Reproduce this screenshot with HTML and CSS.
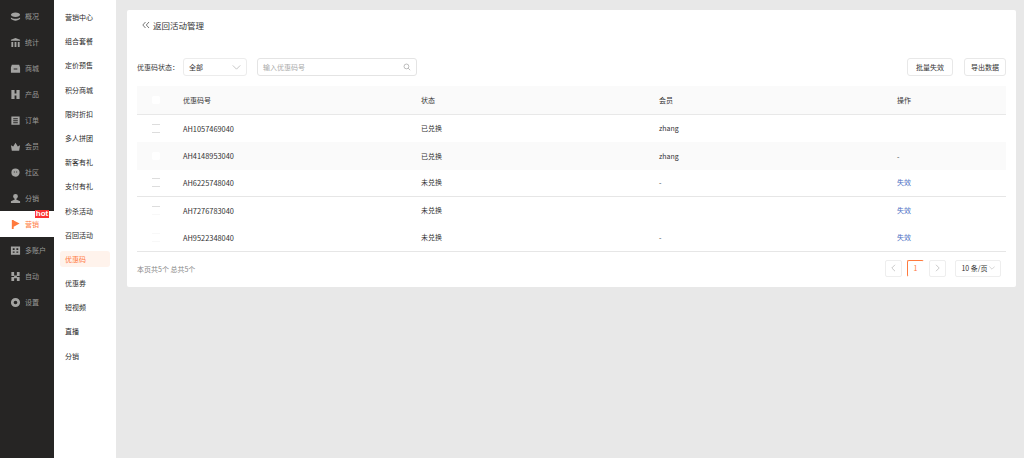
FILE: index.html
```html
<!DOCTYPE html>
<html lang="zh">
<head>
<meta charset="utf-8">
<title>优惠码</title>
<link rel="stylesheet" href="styles.css">
</head>
<body>
<div class="app">
  <nav class="rail">
    <a class="rail-item"><svg class="ri" viewBox="0 0 12 12"><path d="M6 1.500c3 0 5 1.200 5 2.500S9 6.500 6 6.500 1 5.300 1 4s2-2.500 5-2.500z"/><path d="M1 7c1 1 3 1.500 5 1.500S10 8 11 7v1.500C10 9.800 8 10.500 6 10.500S2 9.800 1 8.500z"/></svg>概况</a>
    <a class="rail-item"><svg class="ri" viewBox="0 0 12 12"><path d="M1 3 6 1l5 2v1H1zM1.500 5.500h2V11h-2zM5 5.500h2V11H5zM8.500 5.500h2V11h-2z"/></svg>统计</a>
    <a class="rail-item"><svg class="ri" viewBox="0 0 12 12"><path d="M2 2h8l1 3v5.500H1V5zM4 6v1h4V6z" fill-rule="evenodd"/></svg>商城</a>
    <a class="rail-item"><svg class="ri" viewBox="0 0 12 12"><path d="M1.500 1h3.500v10H1.500zM7 1h3.500v10H7zM5 5h2v2H5z"/></svg>产品</a>
    <a class="rail-item"><svg class="ri" viewBox="0 0 12 12"><path d="M1.500 1.500h9v9h-9zM3.500 3.500v1h5v-1zM3.500 5.800v1h5v-1zM3.500 8v1h5V8z" fill-rule="evenodd"/></svg>订单</a>
    <a class="rail-item"><svg class="ri" viewBox="0 0 12 12"><path d="M1 4.500 3.500 6 6 2l2.500 4L11 4.500l-1 6H2z"/></svg>会员</a>
    <a class="rail-item"><svg class="ri" viewBox="0 0 12 12"><path d="M6 1.500a4.500 4.500 0 1 1 0 9 4.500 4.500 0 0 1 0-9zM4.200 5v1h1V5zM6.800 5v1h1V5z" fill-rule="evenodd"/></svg>社区</a>
    <a class="rail-item"><svg class="ri" viewBox="0 0 12 12"><path d="M6 1a2.600 2.600 0 0 1 2.600 2.600c0 1.300-.8 2.400-1.800 2.800v.8L11 9v2H1V9l4.200-1.800v-.8C4.200 6 3.400 4.900 3.400 3.600A2.600 2.600 0 0 1 6 1z"/></svg>分销</a>
    <a class="rail-item rail-active"><svg class="ri" viewBox="0 0 12 12"><path d="M2 1h2v10H2zM4 1.500 10.500 5 4 8.500z"/></svg>营销<span class="hot">hot</span></a>
    <a class="rail-item"><svg class="ri" viewBox="0 0 12 12"><path d="M1 1.500h10v9H1zM3 3.500v2h2v-2zM7 3.500v2h2v-2zM3 7v1.500h2V7zM7 7v1.500h2V7z" fill-rule="evenodd"/></svg>多账户</a>
    <a class="rail-item"><svg class="ri" viewBox="0 0 12 12"><path d="M1.500 1h3v4h3V1h3v4.500h-3v1h3V11h-3V8h-3v3h-3V6.500h3v-1h-3z"/></svg>自动</a>
    <a class="rail-item"><svg class="ri" viewBox="0 0 12 12"><path d="M6 1a5 5 0 1 1 0 10A5 5 0 0 1 6 1zm0 3a2 2 0 1 0 0 4 2 2 0 0 0 0-4z" fill-rule="evenodd"/></svg>设置</a>
  </nav>
  <aside class="submenu">
    <a class="sub-item">营销中心</a>
    <a class="sub-item">组合套餐</a>
    <a class="sub-item">定价预售</a>
    <a class="sub-item">积分商城</a>
    <a class="sub-item">限时折扣</a>
    <a class="sub-item">多人拼团</a>
    <a class="sub-item">新客有礼</a>
    <a class="sub-item">支付有礼</a>
    <a class="sub-item">秒杀活动</a>
    <a class="sub-item">召回活动</a>
    <a class="sub-item sub-active">优惠码</a>
    <a class="sub-item">优惠券</a>
    <a class="sub-item">短视频</a>
    <a class="sub-item">直播</a>
    <a class="sub-item">分销</a>
  </aside>
  <main class="main">
    <section class="card">
      <header class="back">
        <svg class="back-icon" viewBox="0 0 8 8"><path d="M3.500 1 .8 4l2.700 3M7 1 4.300 4 7 7"/></svg>
        <span>返回活动管理</span>
      </header>
      <div class="toolbar">
        <span class="filter-label">优惠码状态：</span>
        <div class="select">
          <span>全部</span>
          <svg class="chev" viewBox="0 0 10 6"><path d="M.5.500 5 5 9.500.500"/></svg>
        </div>
        <div class="search">
          <span>输入优惠码号</span>
          <svg class="mag" viewBox="0 0 10 10"><circle cx="4.300" cy="4.300" r="3"/><path d="m6.500 6.500 2.500 2.500"/></svg>
        </div>
        <div class="actions">
          <button class="btn">批量失效</button>
          <button class="btn">导出数据</button>
        </div>
      </div>
      <div class="table">
        <div class="row head">
          <span class="cell-check"><i class="dot"></i></span><span>优惠码号</span><span>状态</span><span>会员</span><span>操作</span>
        </div>
        <div class="row">
          <span class="cell-check"><i class="lines"></i></span><span class="code">AH1057469040</span><span>已兑换</span><span>zhang</span><span></span>
        </div>
        <div class="row shade">
          <span class="cell-check"><i class="dot"></i></span><span class="code">AH4148953040</span><span>已兑换</span><span>zhang</span><span>-</span>
        </div>
        <div class="row sep">
          <span class="cell-check"><i class="lines"></i></span><span class="code">AH6225748040</span><span>未兑换</span><span>-</span><a class="link">失效</a>
        </div>
        <div class="row">
          <span class="cell-check"><i class="lines lines-top"></i></span><span class="code">AH7276783040</span><span>未兑换</span><span></span><a class="link">失效</a>
        </div>
        <div class="row sep">
          <span class="cell-check"><i class="lines lines-faint"></i></span><span class="code">AH9522348040</span><span>未兑换</span><span>-</span><a class="link">失效</a>
        </div>
      </div>
      <footer class="foot">
        <span class="total">本页共5个 总共5个</span>
        <div class="pager">
          <span class="pg pg-off"><svg class="pg-arrow" viewBox="0 0 5 8"><path d="M4 .8.800 4 4 7.200"/></svg></span>
          <span class="pg pg-on">1</span>
          <span class="pg pg-off"><svg class="pg-arrow" viewBox="0 0 5 8"><path d="M1 .8 4.200 4 1 7.200"/></svg></span>
          <span class="pg-size">10 条/页<svg class="chev chev-sm" viewBox="0 0 10 6"><path d="M.5.500 5 5 9.500.500"/></svg></span>
        </div>
      </footer>
    </section>
  </main>
</div>
</body>
</html>
```
FILE: styles.css
```css
* { box-sizing: border-box; }
html, body { margin: 0; height: 100%; overflow: hidden; }
body {
  font-family: "Noto Sans CJK SC", "Liberation Sans", sans-serif;
  font-size: 7px;
  color: #333;
  background: #e8e8e8;
}
.app { display: flex; height: 458px; }

.rail {
  width: 54px;
  flex: none;
  background: #262524;
  padding-top: 3px;
  display: flex;
  flex-direction: column;
}
.rail-item {
  position: relative;
  height: 26px;
  flex: none;
  display: flex;
  align-items: center;
  gap: 4px;
  padding-left: 10px;
  color: #9a9a98;
  white-space: nowrap;
}
.ri { width: 11px; height: 11px; flex: none; fill: #a3a3a1; }
.rail-active { background: #fff; color: #ff7a3d; }
.rail-active .ri { fill: #ff7a3d; }
.hot {
  position: absolute;
  left: 35px;
  top: -1px;
  width: 14px;
  height: 8px;
  background: #fb3232;
  color: #fff;
  font-family: "Liberation Sans", sans-serif;
  font-size: 8px;
  font-weight: 700;
  line-height: 8px;
  text-align: center;
}

.submenu {
  width: 62px;
  flex: none;
  background: #fff;
  padding-top: 9px;
  display: flex;
  flex-direction: column;
  align-items: flex-start;
}
.sub-item {
  height: 16px;
  margin: 0 0 8.200px 6px;
  width: 50px;
  padding-left: 5px;
  line-height: 16px;
  color: #2a2a2a;
  flex: none;
}
.sub-active { background: #fff3ec; color: #ff7a3d; border-radius: 3px; }

.main { flex: 1; padding: 10px 8px 0 11px; min-width: 0; }
.card {
  background: #fff;
  border-radius: 2px;
  height: 277px;
  padding: 0 10px;
  display: flex;
  flex-direction: column;
}
.back {
  display: flex;
  align-items: center;
  gap: 3px;
  height: 12px;
  margin: 9px 0 0 5px;
  font-size: 8.500px;
  color: #333;
}
.back-icon { width: 8px; height: 8px; fill: none; stroke: #555; stroke-width: .8; }

.toolbar {
  display: flex;
  align-items: center;
  height: 18px;
  margin-top: 27px;
}
.filter-label { color: #333; width: 46px; flex: none; white-space: nowrap; }
.select {
  width: 64px;
  height: 18px;
  border: 1px solid #ececec;
  border-radius: 3px;
  padding: 0 5px;
  display: flex;
  align-items: center;
  justify-content: space-between;
  flex: none;
}
.chev { width: 9px; height: 5px; fill: none; stroke: #aaa; stroke-width: .8; }
.search {
  width: 160px;
  height: 18px;
  margin-left: 10px;
  border: 1px solid #e4e4e4;
  border-radius: 3px;
  padding: 0 5px;
  color: #aaa;
  display: flex;
  align-items: center;
  justify-content: space-between;
  flex: none;
}
.mag { width: 8px; height: 8px; fill: none; stroke: #999; stroke-width: .8; }
.actions { margin-left: auto; display: flex; gap: 11px; }
.btn {
  height: 18px;
  width: 46px;
  padding: 0;
  background: #fff;
  border: 1px solid #e8e8e8;
  border-radius: 3px;
  font: inherit;
  color: #333;
}
.btn + .btn { width: 42px; }

.table { margin-top: 10px; }
.row {
  display: grid;
  grid-template-columns: 46px 238px 238px 238px 1fr;
  align-items: center;
  height: 27.400px;
  padding-bottom: 1px;
  color: #333;
}
.head { height: 29px; padding-bottom: 0; background: #fafafa; border-bottom: 1px solid #e8e8e8; }
.shade { background: #fafafa; }
.sep { border-bottom: 1px solid #e6e6e6; }
.code { font-size: 7.400px; }
.cell-check { display: flex; justify-content: center; padding-right: 8px; }
.dot { width: 8px; height: 8px; border-radius: 2px; background: #fff; }
.lines { width: 8px; height: 9px; border-top: 1px solid #ddd; border-bottom: 1px solid #ddd; }
.lines-top { border-bottom-color: #f8f8f8; }
.lines-faint { border-color: #f8f8f8; }
.link { color: #4a6fc4; }

.foot {
  flex: 1;
  display: flex;
  align-items: center;
  justify-content: space-between;
}
.total { color: #888; }
.pager { display: flex; align-items: center; padding-right: 5px; margin-bottom: 2px; }
.pg {
  width: 17px;
  height: 17px;
  display: flex;
  align-items: center;
  justify-content: center;
  border-radius: 2px;
  border: 1px solid #eee;
}
.pg-on { border-color: #ff7a3d transparent transparent #ff7a3d; color: #ff7a3d; margin: 0 5px; }
.pg-arrow { width: 5px; height: 8px; fill: none; stroke: #bbb; stroke-width: .8; }
.pg-size {
  margin-left: 9px;
  width: 46px;
  height: 17px;
  border: 1px solid #eee;
  border-radius: 2px;
  display: flex;
  align-items: center;
  justify-content: center;
  gap: 1px;
}
.chev-sm { width: 6px; height: 4px; }
```
